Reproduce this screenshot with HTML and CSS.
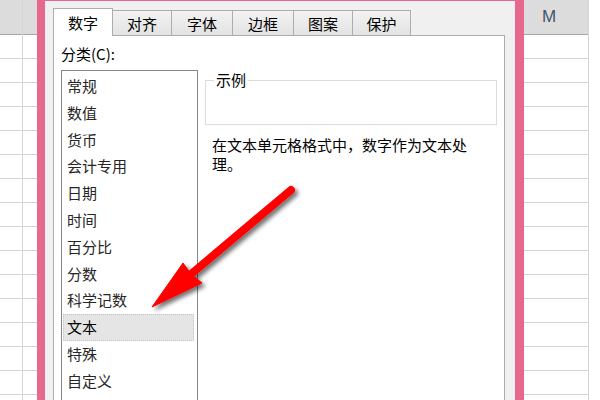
FILE: index.html
```html
<!DOCTYPE html>
<html lang="zh-CN">
<head>
    <meta charset="UTF-8">
    <title>设置单元格格式</title>
    <link rel="stylesheet" href="styles.css">
</head>
<body>
    <div class="screen">
        <!-- Sheet on the left -->
        <div class="sheet sheet-left">
            <div class="col col-a">
                <div class="col-head"></div>
                <div class="col-body"></div>
            </div>
            <div class="col col-b">
                <div class="col-head"></div>
                <div class="col-body"></div>
            </div>
        </div>

        <!-- Format cells dialog -->
        <div class="dialog">
            <div class="dialog-inner">
                <div class="tabs">
                    <div class="tab active">数字</div>
                    <div class="tab">对齐</div>
                    <div class="tab tab-wide">字体</div>
                    <div class="tab tab-wide">边框</div>
                    <div class="tab">图案</div>
                    <div class="tab tab-narrow">保护</div>
                </div>
                <div class="pane">
                    <div class="pane-left">
                        <div class="label">分类(C):</div>
                        <ul class="category-list">
                            <li>常规</li>
                            <li>数值</li>
                            <li>货币</li>
                            <li>会计专用</li>
                            <li>日期</li>
                            <li>时间</li>
                            <li>百分比</li>
                            <li>分数</li>
                            <li>科学记数</li>
                            <li class="selected">文本</li>
                            <li>特殊</li>
                            <li>自定义</li>
                        </ul>
                    </div>
                    <div class="pane-right">
                        <fieldset class="sample">
                            <legend>示例</legend>
                            <div class="sample-body"></div>
                        </fieldset>
                        <p class="description">在文本单元格格式中，数字作为文本处理。</p>
                    </div>
                </div>
            </div>
        </div>

        <!-- Sheet on the right -->
        <div class="sheet sheet-right">
            <div class="col col-m">
                <div class="col-head">M</div>
                <div class="col-body"></div>
            </div>
            <div class="col col-n">
                <div class="col-head"></div>
                <div class="col-body"></div>
            </div>
        </div>

        <!-- Red pointer arrow -->
        <svg class="arrow" width="600" height="400" viewBox="0 0 600 400">
            <defs>
                <filter id="shadow" x="-20%" y="-20%" width="140%" height="140%">
                    <feDropShadow dx="3" dy="3" stdDeviation="2" flood-color="#000" flood-opacity="0.55"/>
                </filter>
            </defs>
            <g filter="url(#shadow)" fill="#ff0000" stroke="#ff0000">
                <line x1="291" y1="190" x2="190" y2="275" stroke-width="8" stroke-linecap="round"/>
                <polygon points="152,307 183,263 191,274 202,283" stroke-width="1"/>
            </g>
        </svg>
    </div>
</body>
</html>
```

FILE: styles.css
```css
/* General */
body {
    margin: 0;
    font-family: "Noto Sans CJK SC", "Noto Sans", sans-serif;
    font-size: 15px;
    color: #000;
}

.screen {
    position: relative;
    display: flex;
    width: 600px;
    height: 400px;
    overflow: hidden;
    background: #fff;
}

/* Spreadsheet */
.sheet {
    display: flex;
    height: 400px;
}

.col {
    display: flex;
    flex-direction: column;
    border-right: 1px solid #d4d4d4;
}

.col-head {
    height: 34px;
    background-color: #dcdcdc;
    border-bottom: 1px solid #a6a6a6;
    color: #44546a;
    font-family: "Liberation Sans", Arial, sans-serif;
    font-size: 17px;
    line-height: 34px;
    text-align: center;
}

.col-body {
    flex: 1;
    background: repeating-linear-gradient(to bottom, transparent 0 23px, #d4d4d4 23px 24px);
}

.col-a { width: 22px; }
.col-b { width: 14px; border-right: none; }
.col-m { width: 64px; }
.col-m .col-head { padding-right: 14px; }
.col-n { flex: 1; border-right: none; }

/* Dialog frame */
.dialog {
    width: 487px;
    height: 400px;
    box-sizing: border-box;
    border-left: 8px solid #e8678f;
    border-right: 9px solid #e8678f;
    border-top: 1px solid #e8678f;
    box-shadow: inset 1px 0 0 #c65379, inset -1px 0 0 #c65379;
}

.dialog-inner {
    height: 100%;
    background-color: #f0f0f0;
    padding: 7px 10px 0 8px;
    box-sizing: border-box;
}

/* Tabs */
.tabs {
    display: flex;
    align-items: flex-end;
    height: 27px;
}

.tab {
    width: 59px;
    height: 25px;
    box-sizing: border-box;
    border: 1px solid #adadad;
    border-bottom: none;
    border-left: none;
    background: linear-gradient(#f2f2f2, #e3e3e3);
    text-align: center;
    line-height: 26px;
}

.tab-wide { width: 61px; }
.tab-narrow { width: 58px; }

.tab.active {
    width: 60px;
    height: 28px;
    margin-bottom: -1px;
    border-left: 1px solid #adadad;
    background: #fff;
    position: relative;
    line-height: 28px;
}

/* Pane */
.pane {
    display: flex;
    gap: 7px;
    height: 400px;
    background: #fff;
    border: 1px solid #adadad;
    padding: 8px 7px 0 7px;
}

.label {
    line-height: 20px;
    margin-bottom: 6px;
}

.category-list {
    list-style: none;
    margin: 0;
    padding: 2px 1px;
    width: 133px;
    height: 400px;
    border: 1px solid #828790;
    color: #262626;
}

.category-list li {
    height: 26.8px;
    line-height: 26.8px;
    padding-left: 4px;
    margin-right: 2px;
}

.category-list li.selected {
    background-color: #e5e5e5;
    outline: 1px dotted #c4c4c4;
    outline-offset: -1px;
    color: #000;
}

.pane-right {
    width: 292px;
    padding-top: 26px;
}

.sample {
    margin: 0;
    padding: 0 8px;
    border: 1px solid #dcdcdc;
}

.sample legend {
    padding: 0 2px;
    line-height: 20px;
}

.sample-body {
    height: 34px;
}

.description {
    width: 262px;
    margin: 10px 0 0 7px;
    line-height: 19px;
}

/* Arrow overlay */
.arrow {
    position: absolute;
    left: 0;
    top: 0;
    pointer-events: none;
}
```
